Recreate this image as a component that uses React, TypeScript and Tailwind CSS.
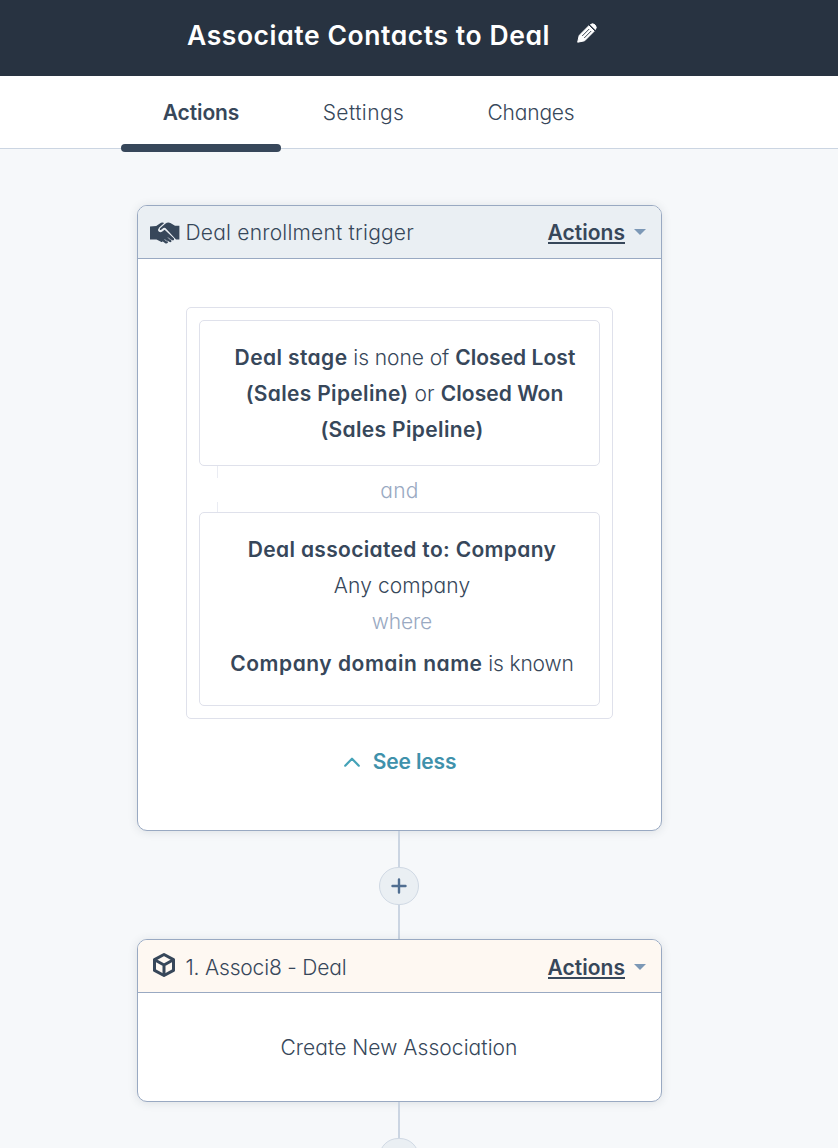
import type { ReactNode } from "react";

const tabs = [
  { label: "Actions", className: "w-40 font-semibold tracking-[-0.1px]" },
  { label: "Settings", className: "w-[165px] font-light tracking-[0.43px]" },
  { label: "Changes", className: "w-[170px] font-light tracking-[-0.2px]" },
];

function PencilIcon() {
  return (
    <svg width="20" height="20" viewBox="0 0 20 20" fill="none">
      <path d="M0.7 19.2 2.2 12.4 11.8 2.8 17.2 8.2 7.6 17.8Z" fill="#fff" stroke="#fff" strokeLinejoin="round" />
      <path d="M13.4 1.7Q15.6-.3 18 1.9 20.3 4.3 18.4 6.6Z" fill="#fff" stroke="#fff" strokeLinejoin="round" />
      <path d="m5.2 13 7-7M7.2 15l7-7" stroke="#283341" strokeWidth="0.9" />
      <path d="m12.5 2.4 5.1 5.1" stroke="#283341" strokeWidth="0.5" />
    </svg>
  );
}

function HandshakeIcon() {
  return (
    <svg width="30" height="22" viewBox="0 0 30 22" fill="#37475a">
      <path d="M0 4.6 6.2 4 11 .8Q12.6.2 14.2.9L9.2 5.4Q7.2 7.6 8.7 9.5 10.3 11.1 12.3 9.6L14.6 7.8 24 16.4Q24.6 18 23 18.4L20.8 17.6 21.6 19.2Q20.6 20.7 19.2 19.8L17.3 18.4 18 20.4Q16.8 22 15.2 21.2L12.6 19.2Q12 20.8 10.5 19.6L6.5 17.6H0Z" />
      <path d="M15.2 1.8Q17.8-.2 20.4 1L25 3.8H29.4V17.6H26L15.4 6.1Q14.4 5.2 13.4 6.1L11.2 7.8Q10.2 8.3 9.8 7.4 9.7 6.7 10.4 6.1Z" />
      <path d="m15 17.6 1.6 1.6M18.4 15.8l1.8 1.8" stroke="#eaeff3" strokeWidth="0.8" strokeLinecap="round" />
    </svg>
  );
}

function CubeIcon() {
  return (
    <svg width="24" height="26" viewBox="0 0 24 26" fill="none" stroke="#37475a" strokeWidth="3" strokeLinejoin="round">
      <path d="M12 2.5 21.5 7.6V18.4L12 23.5 2.5 18.4V7.6Z" />
      <path d="m3 8 9 5 9-5M12 13v10" />
    </svg>
  );
}

function ActionsMenu({ className }: { className?: string }) {
  return (
    <button className={`flex items-center gap-[9px] ${className ?? ""}`}>
      <span className="flex h-[23px] flex-col border-b-2 border-[#37475a] leading-[23px] font-semibold tracking-[0.03px]">
        Actions
      </span>
      <svg width="12" height="6" viewBox="0 0 12 6" fill="#7c98b6">
        <path d="M0 0h12L6 6Z" />
      </svg>
    </button>
  );
}

function Card({
  icon,
  title,
  headerClass,
  menuClass,
  children,
}: {
  icon: ReactNode;
  title: ReactNode;
  headerClass: string;
  menuClass?: string;
  children: ReactNode;
}) {
  return (
    <section className="w-[525px] overflow-hidden rounded-[10px] border border-[#99a9c2] bg-white shadow-[0_1px_10px_rgba(45,62,80,0.13)]">
      <header className={`flex h-[53px] items-center border-b border-[#99a9c2] pr-[15px] pl-3 ${headerClass}`}>
        <span className="flex w-[35.5px] shrink-0">{icon}</span>
        <h2 className="flex-1 font-light">{title}</h2>
        <ActionsMenu className={menuClass} />
      </header>
      {children}
    </section>
  );
}

function Connector({ className }: { className: string }) {
  return <div className={`mr-0.5 w-0.5 bg-[#cbd5e2] ${className}`} />;
}

function AddButton() {
  return (
    <button className="mr-0.5 flex h-[38px] w-10 shrink-0 items-center justify-center rounded-full border border-[#d0d9e4] bg-[#eaeff3]">
      <svg width="16" height="16" viewBox="0 0 16 16" stroke="#506e91" strokeWidth="2.4" strokeLinecap="round">
        <path d="M8 1.5v13M1.5 8h13" />
      </svg>
    </button>
  );
}

export default function App() {
  return (
    <div className="flex h-[1148px] w-[838px] flex-col overflow-hidden bg-[#f6f8fa] font-['Inter','Liberation_Sans',sans-serif] text-[21px] leading-9 whitespace-nowrap text-[#37475a] [font-feature-settings:'cv11']">
      <header className="flex h-[76px] shrink-0 items-center bg-[#283341] pb-1.5 pl-[187px] text-white">
        <h1 className="w-[389.5px] text-[26.5px] font-semibold tracking-[0.57px]">Associate Contacts to Deal</h1>
        <div className="pb-1">
          <PencilIcon />
        </div>
      </header>

      <nav className="flex h-[73px] shrink-0 border-b border-[#cbd5e2] bg-white pl-[121px]">
        {tabs.map((tab, i) => (
          <a key={tab.label} className={`relative pt-[19px] text-center ${tab.className}`}>
            {tab.label}
            {i === 0 && <span className="absolute top-[68px] left-0 h-2 w-40 rounded-full bg-[#37475a]" />}
          </a>
        ))}
      </nav>

      <main className="flex w-[799px] flex-col items-center pt-14">
        <Card
          icon={
            <span className="pt-0.5">
              <HandshakeIcon />
            </span>
          }
          title={<p className="pt-0.5 tracking-[0.21px]">Deal enrollment trigger</p>}
          headerClass="bg-[#eaeff3]"
        >
          <div className="flex h-[571px] flex-col items-center pt-12">
            <div className="h-[412px] w-[427px] rounded-[5px] border border-[#dfe1eb] p-3">
              <div className="flex h-[146px] flex-col items-center rounded-[5px] border border-[#dfe1eb] pt-[19px]">
                <p className="pl-[11px] font-light tracking-[-0.06px]">
                  <b className="font-semibold tracking-[0.4px]">Deal stage</b> is none of{" "}
                  <b className="font-semibold tracking-[0.05px]">Closed Lost</b>
                </p>
                <p className="pl-[10px] font-light tracking-[0.1px]">
                  <b className="font-semibold tracking-[0.32px]">(Sales Pipeline)</b> or{" "}
                  <b className="font-semibold tracking-[0.05px]">Closed Won</b>
                </p>
                <p className="pl-[5px] font-semibold tracking-[0.34px]">(Sales Pipeline)</p>
              </div>
              <div className="flex h-[46px]">
                <div className="ml-[18px] flex w-px flex-col justify-between">
                  <span className="h-3 bg-[#eaecf3]" />
                  <span className="h-2.5 bg-[#eaecf3]" />
                </div>
                <p className="flex-1 pt-[7px] pr-[19px] text-center font-light tracking-[0.27px] text-[#99a9c2]">and</p>
              </div>
              <div className="flex h-[194px] flex-col items-center rounded-[5px] border border-[#dfe1eb] pt-[19px] pl-[5px]">
                <p className="font-semibold tracking-[0.33px]">Deal associated to: Company</p>
                <p className="font-light tracking-[0.1px]">Any company</p>
                <p className="font-light tracking-[-0.15px] text-[#99a9c2]">where</p>
                <p className="pt-1.5 font-light tracking-[-0.15px]">
                  <b className="font-semibold tracking-[0.52px]">Company domain name</b> is known
                </p>
              </div>
            </div>
            <button className="mt-[25px] flex items-center gap-[13px] font-semibold text-[#3f91ab]">
              <svg className="ml-px" width="16" height="10" viewBox="0 0 16 10" fill="none" stroke="#45a3b8" strokeWidth="2.2" strokeLinecap="round" strokeLinejoin="round">
                <path d="M1.2 8.7 8 1.7l6.8 7" />
              </svg>
              <span className="tracking-[-0.15px]">See less</span>
            </button>
          </div>
        </Card>

        <Connector className="h-9" />
        <AddButton />
        <Connector className="h-[34px]" />

        <Card
          icon={
            <span className="-mt-0.5 pl-[2px]">
              <CubeIcon />
            </span>
          }
          title={<p className="pt-1 tracking-[-0.18px]">1. Associ8 - Deal</p>}
          headerClass="bg-[#fef8f2]"
          menuClass="pt-0.5"
        >
          <p className="h-[108px] pt-[37px] pr-px text-center font-light tracking-[0.06px]">Create New Association</p>
        </Card>

        <Connector className="h-9" />
        <AddButton />
      </main>
    </div>
  );
}
